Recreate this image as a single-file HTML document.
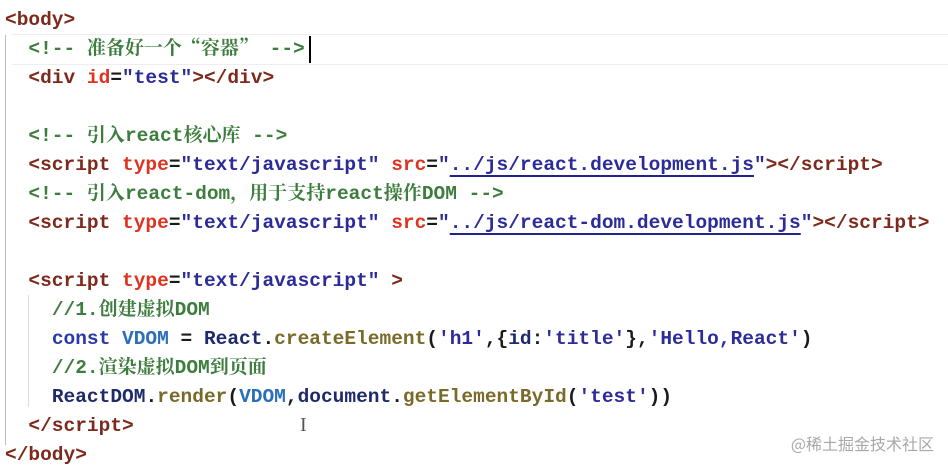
<!DOCTYPE html>
<html><head><meta charset="utf-8"><style>
html,body{margin:0;padding:0;background:#fff;width:948px;height:469px;overflow:hidden;position:relative}
.code{position:absolute;left:5px;top:6px;font-family:"Liberation Mono","Noto Sans CJK SC",monospace;font-size:19.5px;font-weight:bold;color:#1a1a1a}
.code div{height:29px;line-height:29px;overflow:visible;white-space:pre}
.t{color:#7d2a1c}.a{color:#e0321e}.v{color:#2b2b9a}.c{color:#3d7d3d}.m{color:#7a6a28}.k{color:#2a3aa8}.n{color:#2a6fb8}.p{color:#1e2a6a}
.u{text-decoration:underline;text-decoration-color:#22228a;text-underline-offset:5px;text-decoration-thickness:2px}
.cj{font-family:"Noto Serif CJK SC",serif;font-weight:bold;line-height:1;font-size:19px}
.hl{position:absolute;left:12px;right:0;top:34px;height:29px;border-top:1px solid #eee;border-bottom:1px solid #eee}
.g1{position:absolute;left:5px;top:35px;width:1px;height:410px;background:#bbb}
.g2{position:absolute;left:28px;top:295px;width:1px;height:112px;background:#ddd}
.cur{position:absolute;left:309px;top:36px;width:2px;height:27px;background:#000}
.wm{position:absolute;right:14px;top:431px;font-family:"Noto Sans CJK SC",sans-serif;font-size:16px;color:#a8a8a8}
.ib{position:absolute;left:300px;top:414px;font-family:"Liberation Serif",serif;font-size:20px;color:#555}
</style></head><body>
<div class="hl"></div><div class="g1"></div><div class="g2"></div><div class="cur"></div>
<div class="code">
<div><span class="t">&lt;body&gt;</span></div>
<div>  <span class="c">&lt;!-- <span class="cj">准备好一个“容器”</span> --&gt;</span></div>
<div>  <span class="t">&lt;div</span> <span class="a">id</span>=<span class="v">"test"</span><span class="t">&gt;&lt;/div&gt;</span></div>
<div> </div>
<div>  <span class="c">&lt;!-- <span class="cj">引入</span>react<span class="cj">核心库</span> --&gt;</span></div>
<div>  <span class="t">&lt;script</span> <span class="a">type</span>=<span class="v">"text/javascript"</span> <span class="a">src</span>=<span class="v">"<span class="u">../js/react.development.js</span>"</span><span class="t">&gt;&lt;/script&gt;</span></div>
<div>  <span class="c">&lt;!-- <span class="cj">引入</span>react-dom<span class="cj">，用于支持</span>react<span class="cj">操作</span>DOM --&gt;</span></div>
<div>  <span class="t">&lt;script</span> <span class="a">type</span>=<span class="v">"text/javascript"</span> <span class="a">src</span>=<span class="v">"<span class="u">../js/react-dom.development.js</span>"</span><span class="t">&gt;&lt;/script&gt;</span></div>
<div> </div>
<div>  <span class="t">&lt;script</span> <span class="a">type</span>=<span class="v">"text/javascript"</span> <span class="t">&gt;</span></div>
<div>    <span class="c">//1.<span class="cj">创建虚拟</span>DOM</span></div>
<div>    <span class="k">const</span> <span class="n">VDOM</span> = <span class="p">React</span>.<span class="m">createElement</span>(<span class="v">'h1'</span>,{<span class="p">id</span>:<span class="v">'title'</span>},<span class="v">'Hello,React'</span>)</div>
<div>    <span class="c">//2.<span class="cj">渲染虚拟</span>DOM<span class="cj">到页面</span></span></div>
<div>    <span class="p">ReactDOM</span>.<span class="m">render</span>(<span class="n">VDOM</span>,<span class="p">document</span>.<span class="m">getElementById</span>(<span class="v">'test'</span>))</div>
<div>  <span class="t">&lt;/script&gt;</span></div>
<div><span class="t">&lt;/body&gt;</span></div>
</div>
<div class="ib">I</div>
<div class="wm">@稀土掘金技术社区</div>
</body></html>
